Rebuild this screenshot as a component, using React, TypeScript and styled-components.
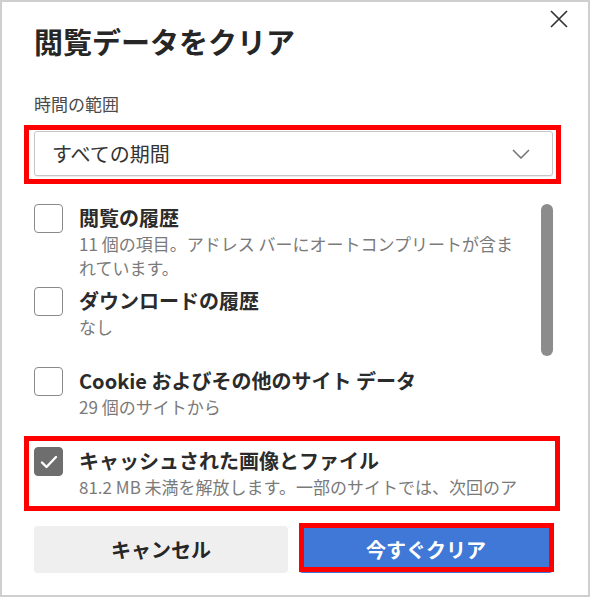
import React from "react";
import styled, { createGlobalStyle } from "styled-components";

const GlobalStyle = createGlobalStyle`
  html, body { margin: 0; padding: 0; background: #ffffff; }
  body { font-family: "Noto Sans CJK JP", "Noto Sans", sans-serif; }
  * { box-sizing: border-box; }
`;

const Dialog = styled.div`
  width: 590px;
  height: 597px;
  border: 2px solid #cfcfcf;
  padding: 8px 35px 0 32px;
  display: flex;
  flex-direction: column;
  background: #ffffff;
`;

const Header = styled.div`
  display: flex;
  justify-content: space-between;
  align-items: flex-start;
`;

const Title = styled.h1`
  margin: 13px 0 0;
  font-size: 29px;
  line-height: 36px;
  font-weight: 700;
  color: #262626;
`;

const CloseButton = styled.button`
  width: 18px;
  height: 18px;
  padding: 0;
  margin-right: -15px;
  border: 0;
  background: none;
  display: flex;
  cursor: pointer;
`;

const SectionLabel = styled.div`
  margin-top: 33px;
  font-size: 17px;
  line-height: 24px;
  color: #4a4a4a;
`;

const Highlight = styled.div<{ $inset: string; $top?: number }>`
  position: relative;
  margin-top: ${(p) => (p.$top ? `${p.$top}px` : "0")};
  &::after {
    content: "";
    position: absolute;
    inset: ${(p) => p.$inset};
    border: 5px solid #ff0000;
    pointer-events: none;
  }
`;

const Select = styled.div`
  height: 45px;
  border: 1px solid #c6c6c6;
  border-radius: 3px;
  box-shadow: 0 1px 1px rgba(0, 0, 0, 0.08);
  display: flex;
  align-items: center;
  justify-content: space-between;
  padding: 0 22px 0 17px;
  font-size: 20px;
  color: #333333;
  background: #ffffff;
`;

const ScrollArea = styled.div`
  margin: 28px -9px 0 -10px;
  padding: 0 9px 0 10px;
  height: 310px;
  overflow: hidden;
  display: flex;
  align-items: flex-start;
`;

const ItemList = styled.div`
  width: 490px;
  flex-shrink: 0;
  display: flex;
  flex-direction: column;
`;

const ScrollTrack = styled.div`
  margin-left: auto;
  width: 12px;
`;

const Thumb = styled.div`
  width: 12px;
  height: 152px;
  border-radius: 6px;
  background: #8c8c8c;
`;

const Item = styled.label`
  display: grid;
  grid-template-columns: 29px 1fr;
  column-gap: 16px;
  align-items: start;
  min-height: 80px;
  padding-bottom: 7px;
  cursor: pointer;
`;

const Box = styled.span<{ $checked: boolean }>`
  width: 29px;
  height: 29px;
  border-radius: 4px;
  border: 1.5px solid ${(p) => (p.$checked ? "#6e6e6e" : "#8a8a8a")};
  background: ${(p) => (p.$checked ? "#6e6e6e" : "#ffffff")};
  display: flex;
  align-items: center;
  justify-content: center;
`;

const ItemText = styled.div`
  display: flex;
  flex-direction: column;
`;

const ItemTitle = styled.div`
  font-size: 20px;
  line-height: 28px;
  font-weight: 700;
  color: #2b2b2b;
`;

const ItemDesc = styled.div<{ $lines?: number }>`
  font-size: 17px;
  line-height: 24px;
  color: #7a7a7a;
  ${(p) => (p.$lines ? `max-height: ${p.$lines * 24}px; overflow: hidden;` : "")}
`;

const Footer = styled.div`
  display: grid;
  grid-template-columns: 1fr 1fr;
  column-gap: 11px;
  margin-top: 12px;
`;

const Button = styled.button<{ $primary?: boolean }>`
  width: 100%;
  height: 47px;
  border: 0;
  border-radius: 4px;
  font-family: inherit;
  font-size: 20px;
  font-weight: 700;
  cursor: pointer;
  background: ${(p) => (p.$primary ? "#3f78d6" : "#efefef")};
  color: ${(p) => (p.$primary ? "#ffffff" : "#262626")};
`;

type Entry = { title: string; desc: string; checked: boolean; lines?: number };

const entries: Entry[] = [
  { title: "閲覧の履歴", desc: "11 個の項目。アドレス バーにオートコンプリートが含まれています。", checked: false },
  { title: "ダウンロードの履歴", desc: "なし", checked: false },
  { title: "Cookie およびその他のサイト データ", desc: "29 個のサイトから", checked: false },
  {
    title: "キャッシュされた画像とファイル",
    desc: "81.2 MB 未満を解放します。一部のサイトでは、次回のア",
    checked: true,
    lines: 1,
  },
];

const CheckIcon = () => (
  <svg width="18" height="14" viewBox="0 0 18 14" aria-hidden>
    <polyline points="2,7.5 6.5,12 16,2" fill="none" stroke="#ffffff" strokeWidth="2.4" strokeLinecap="round" strokeLinejoin="round" />
  </svg>
);

const Row = ({ e }: { e: Entry }) => (
  <Item>
    <Box $checked={e.checked} role="checkbox" aria-checked={e.checked}>
      {e.checked && <CheckIcon />}
    </Box>
    <ItemText>
      <ItemTitle>{e.title}</ItemTitle>
      <ItemDesc $lines={e.lines}>{e.desc}</ItemDesc>
    </ItemText>
  </Item>
);

export default function App() {
  return (
    <>
      <GlobalStyle />
      <Dialog>
        <Header>
          <Title>閲覧データをクリア</Title>
          <CloseButton aria-label="閉じる">
            <svg width="18" height="18" viewBox="0 0 18 18">
              <path d="M1 1 L17 17 M17 1 L1 17" stroke="#333333" strokeWidth="1.7" fill="none" />
            </svg>
          </CloseButton>
        </Header>
        <SectionLabel>時間の範囲</SectionLabel>
        <Highlight $inset="-6px -8px -8px -10px" $top={15}>
          <Select>
            <span>すべての期間</span>
            <svg width="18" height="10" viewBox="0 0 18 10">
              <polyline points="1,1 9,9 17,1" fill="none" stroke="#777777" strokeWidth="1.6" />
            </svg>
          </Select>
        </Highlight>
        <ScrollArea>
          <ItemList>
            {entries.map((e) =>
              e.checked ? (
                <Highlight key={e.title} $inset="-11px -36px 16px -10px">
                  <Row e={e} />
                </Highlight>
              ) : (
                <Row key={e.title} e={e} />
              )
            )}
          </ItemList>
          <ScrollTrack>
            <Thumb />
          </ScrollTrack>
        </ScrollArea>
        <Footer>
          <Button>キャンセル</Button>
          <Highlight $inset="-3px -1px 1px 0">
            <Button $primary>今すぐクリア</Button>
          </Highlight>
        </Footer>
      </Dialog>
    </>
  );
}
